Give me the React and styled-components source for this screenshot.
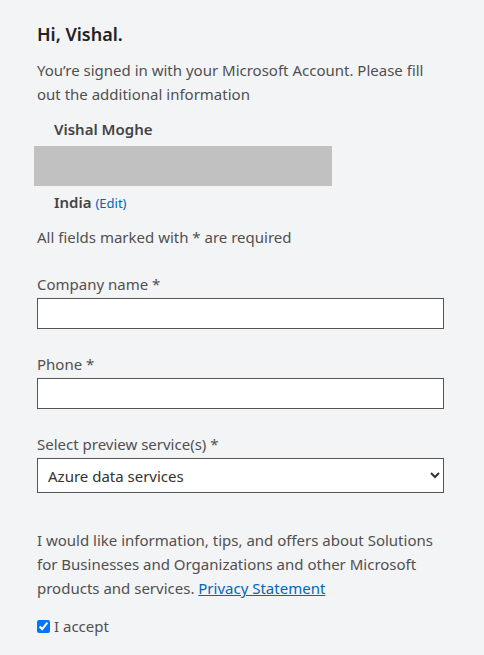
import styled, { createGlobalStyle } from "styled-components"

const GlobalStyle = createGlobalStyle`
    html, body {
        margin: 0;
        padding: 0;
        background-color: #F3F4F6;
    }
    body {
        font-family: "Segoe UI", "Noto Sans", "Open Sans", sans-serif;
        color: #505050;
    }
`

export default function App() {
    return (
        <>
            <GlobalStyle />
            <Page>
                <Title>Hi, Vishal.</Title>
                <Intro>You’re signed in with your Microsoft Account. Please fill out the additional information</Intro>
                <Account>
                    <AccountName>Vishal Moghe</AccountName>
                    <Redacted />
                    <AccountName>
                        India <EditLink href="#">(Edit)</EditLink>
                    </AccountName>
                </Account>
                <Note>All fields marked with * are required</Note>

                <Field>
                    <Label htmlFor="company">Company name *</Label>
                    <TextInput id="company" type="text" />
                </Field>
                <Field>
                    <Label htmlFor="phone">Phone *</Label>
                    <TextInput id="phone" type="tel" />
                </Field>
                <Field>
                    <Label htmlFor="service">Select preview service(s) *</Label>
                    <Select id="service" defaultValue="azure">
                        <option value="azure">Azure data services</option>
                    </Select>
                </Field>

                <Consent>
                    I would like information, tips, and offers about Solutions for Businesses and Organizations and other Microsoft products and services. <PrivacyLink href="#">Privacy Statement</PrivacyLink>
                </Consent>
                <CheckRow>
                    <input type="checkbox" defaultChecked />
                    I accept
                </CheckRow>
            </Page>
        </>
    )
}

const Page = styled.div`
    width: 407px;
    padding: 21px 0 20px 37px;
`
const Title = styled.h1`
    margin: 0;
    font-size: 18px;
    font-weight: 600;
    color: #222222;
    line-height: 26px;
`
const Intro = styled.p`
    margin: 11px 0 0;
    font-size: 15px;
    line-height: 24px;
`
const Account = styled.div`
    margin: 11px 0 0 -3px;
    width: 298px;
`
const AccountName = styled.div`
    padding-left: 20px;
    font-size: 15px;
    font-weight: 600;
    line-height: 24px;
    color: #444444;
`
const Redacted = styled.div`
    height: 40px;
    margin: 5px 0 4px;
    background-color: #C1C1C1;
`
const EditLink = styled.a`
    font-size: 13px;
    font-weight: 400;
    color: #0067B8;
    text-decoration: none;
`
const Note = styled.p`
    margin: 10px 0 0;
    font-size: 15px;
    line-height: 24px;
`
const Field = styled.div`
    margin-top: 23px;
    display: flex;
    flex-direction: column;
`
const Label = styled.label`
    font-size: 15px;
    line-height: 24px;
    margin-bottom: 2px;
`
const TextInput = styled.input`
    box-sizing: border-box;
    width: 407px;
    height: 31px;
    border: 1px solid #555555;
    border-radius: 0;
    background: #FFFFFF;
    outline: none;
`
const Select = styled.select`
    box-sizing: border-box;
    width: 407px;
    height: 35px;
    padding: 0 6px;
    border: 1px solid #555555;
    border-radius: 0;
    background: #FFFFFF;
    font-family: inherit;
    font-size: 15px;
    color: #333333;
`
const Consent = styled.p`
    margin: 35px 0 0;
    font-size: 15px;
    line-height: 24px;
`
const PrivacyLink = styled.a`
    color: #0067B8;
    text-decoration: underline;
`
const CheckRow = styled.label`
    margin-top: 16px;
    display: flex;
    align-items: center;
    gap: 4px;
    font-size: 15px;
    line-height: 20px;

    input {
        margin: 0;
        width: 13px;
        height: 13px;
    }
`
